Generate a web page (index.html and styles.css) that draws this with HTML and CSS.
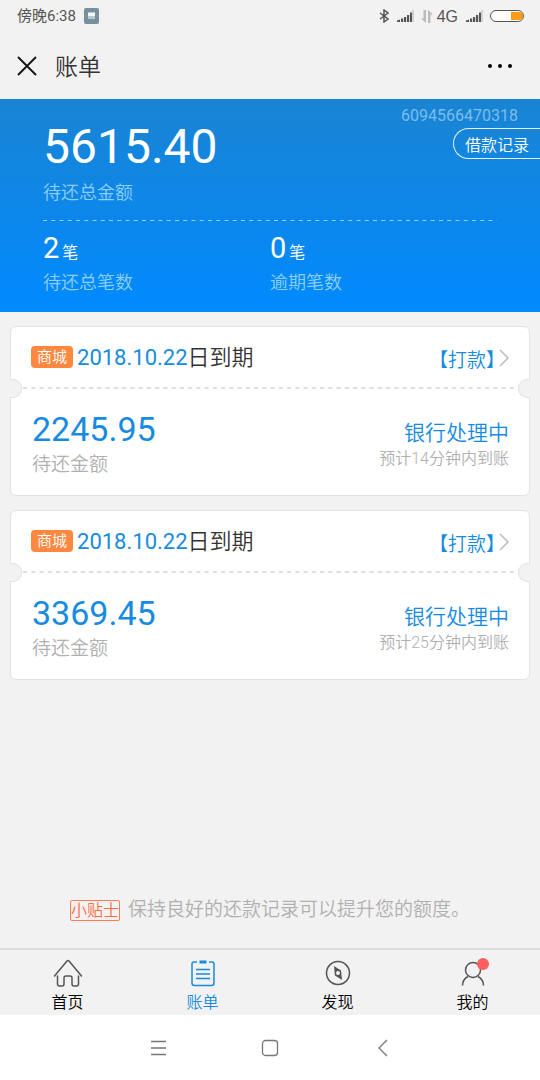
FILE: index.html
```
<!DOCTYPE html>
<html lang="zh-CN">
<head>
  <meta charset="UTF-8">
  <meta name="viewport" content="width=device-width, initial-scale=1.0">
  <title>账单</title>
  <link rel="stylesheet" href="styles.css">
</head>
<body>
  <div class="status-bar">
    <span class="time">傍晚6:38</span>
    <svg class="app-icon" width="15" height="16" viewBox="0 0 15 16"><rect width="15" height="16" rx="2" fill="#78909c"/><rect x="4" y="4" width="7" height="7" fill="#b9c8d0"/><rect x="4" y="5" width="7" height="3" fill="#f4f7f8"/></svg>
    <div class="status-icons">
      <svg width="10" height="14" viewBox="0 0 10 14" fill="none" stroke="#555" stroke-width="1.500"><path d="M1 4l8 6-4 3V1l4 3-8 6"/></svg>
      <svg class="signal" width="17" height="12" viewBox="0 0 17 12" fill="#555"><path d="M0 10.500l3-1V12H0zM4 8.500h2.200V12H4zM7 7h2.200v5H7zM10 5h2.200v7H10zM13 2.500h2V12h-2z"/><path d="M15 0h2v12h-2z" fill="#d2d2d2"/></svg>
      <svg class="data" width="12" height="13" viewBox="0 0 12 13" fill="#bbb"><path d="M2.500 0H5v13L0 8.500h2.500zM7 0l5 4.500H9.500V13H7z"/></svg>
      <span class="network">4G</span>
      <svg class="signal" width="17" height="12" viewBox="0 0 17 12" fill="#555"><path d="M0 10.500l3-1V12H0zM4 8.500h2.200V12H4zM7 7h2.200v5H7zM10 5h2.200v7H10zM13 2.500h2V12h-2z"/><path d="M15 0h2v12h-2z" fill="#d2d2d2"/></svg>
      <svg class="battery" width="34" height="12" viewBox="0 0 34 12"><rect x=".5" y=".5" width="33" height="11" rx="5.500" fill="#fff" stroke="#555"/><path d="M21 2h8a4 4 0 0 1 0 8h-8z" fill="#ff9a1a"/></svg>
    </div>
  </div>

  <header class="title-bar">
    <button class="icon-button" type="button" aria-label="关闭">
      <svg width="20" height="20" viewBox="0 0 20 20" fill="none" stroke="#111" stroke-width="1.800"><path d="M1 1l18 18M19 1L1 19"/></svg>
    </button>
    <h1>账单</h1>
    <button class="icon-button more" type="button" aria-label="更多">
      <svg width="24" height="4" viewBox="0 0 24 4" fill="#000"><circle cx="2" cy="2" r="2"/><circle cx="12" cy="2" r="2"/><circle cx="22" cy="2" r="2"/></svg>
    </button>
  </header>

  <section class="summary">
    <div class="account">
      <span class="account-id">6094566470318</span>
      <a class="history" href="#history">借款记录</a>
    </div>
    <div class="total">5615.40</div>
    <div class="summary-label">待还总金额</div>
    <svg class="summary-line" width="100%" height="1"><line x1="0" y1="0.500" x2="100%" y2="0.500" stroke="#9ad4f5" stroke-dasharray="4 4.250"/></svg>
    <div class="counts">
      <div>
        <div class="count">2<small>笔</small></div>
        <div class="summary-label">待还总笔数</div>
      </div>
      <div>
        <div class="count">0<small>笔</small></div>
        <div class="summary-label">逾期笔数</div>
      </div>
    </div>
  </section>

  <main class="bills">
    <article class="bill">
      <div class="bill-head">
        <span class="tag">商城</span>
        <span class="due"><span class="date">2018.10.22</span>日到期</span>
        <a class="pay" href="#pay">【打款】<svg width="10" height="18" viewBox="0 0 10 18" fill="none" stroke="#bbb" stroke-width="1.500"><path d="M1 1l8 8-8 8"/></svg></a>
      </div>
      <div class="tear"><svg width="100%" height="2"><line x1="0" y1="1" x2="100%" y2="1" stroke="#d5d5d5" stroke-width="1.500" stroke-dasharray="4.250 4"/></svg></div>
      <div class="bill-body">
        <div>
          <div class="amount">2245.95</div>
          <div class="amount-label">待还金额</div>
        </div>
        <div class="state">
          <div class="state-name">银行处理中</div>
          <div class="state-note">预计14分钟内到账</div>
        </div>
      </div>
    </article>

    <article class="bill">
      <div class="bill-head">
        <span class="tag">商城</span>
        <span class="due"><span class="date">2018.10.22</span>日到期</span>
        <a class="pay" href="#pay">【打款】<svg width="10" height="18" viewBox="0 0 10 18" fill="none" stroke="#bbb" stroke-width="1.500"><path d="M1 1l8 8-8 8"/></svg></a>
      </div>
      <div class="tear"><svg width="100%" height="2"><line x1="0" y1="1" x2="100%" y2="1" stroke="#d5d5d5" stroke-width="1.500" stroke-dasharray="4.250 4"/></svg></div>
      <div class="bill-body">
        <div>
          <div class="amount">3369.45</div>
          <div class="amount-label">待还金额</div>
        </div>
        <div class="state">
          <div class="state-name">银行处理中</div>
          <div class="state-note">预计25分钟内到账</div>
        </div>
      </div>
    </article>
  </main>

  <p class="tip"><span class="tip-tag">小贴士</span>保持良好的还款记录可以提升您的额度。</p>

  <nav class="tabs">
    <a href="#home">
      <svg width="30" height="28" viewBox="0 0 30 28" fill="none" stroke="#555" stroke-width="1.500" stroke-linecap="round" stroke-linejoin="round"><path d="M1.500 17L14 2q1-1 2 0l12.500 15"/><path d="M4.500 17v8q0 2 2 2h2.500q2 0 2-2v-6q0-2 2-2h4q2 0 2 2v6q0 2 2 2h2.500q2 0 2-2v-8"/></svg>
      首页
    </a>
    <a class="active" href="#bill">
      <svg width="30" height="28" viewBox="0 0 30 28" fill="none" stroke="#168be0" stroke-width="1.500"><path d="M9 3H6Q4 3 4 5v19q0 2.500 2.500 2.500h17q2.500 0 2.500-2.500V5q0-2-2-2h-3M8 10.500h14M8 15h14M8 19.500h14"/><path d="M11.500 3h7" stroke-width="3"/></svg>
      账单
    </a>
    <a href="#discover">
      <svg width="30" height="28" viewBox="0 0 30 28" fill="none" stroke="#555" stroke-width="1.500"><circle cx="15" cy="14" r="11.500"/><path d="M11 7l7 4.500 1 9.500-7-4.500z" fill="#555" stroke="none"/><circle cx="15" cy="14" r="2.600" fill="#f2f2f2" stroke-width="1.200"/></svg>
      发现
    </a>
    <a class="mine" href="#mine">
      <svg width="30" height="28" viewBox="0 0 30 28" fill="none" stroke="#555" stroke-width="1.500"><circle cx="15" cy="11" r="7.500"/><path d="M4.500 26.500q0-6 5.500-9M25.500 26.500q0-6-5.500-9"/></svg>
      我的
    </a>
  </nav>

  <div class="system-nav">
    <button type="button" aria-label="菜单"><svg width="18" height="18" viewBox="0 0 18 18" fill="none" stroke="#777" stroke-width="1.500"><path d="M2 2.500h15M2 9h15M2 15.500h15"/></svg></button>
    <button type="button" aria-label="主屏幕"><svg width="18" height="18" viewBox="0 0 18 18" fill="none" stroke="#777" stroke-width="1.300"><rect x="1.500" y="1.500" width="15" height="15" rx="3"/></svg></button>
    <button type="button" aria-label="返回"><svg width="18" height="18" viewBox="0 0 18 18" fill="none" stroke="#777" stroke-width="1.300"><path d="M14 1L6 9l8 8"/></svg></button>
  </div>
</body>
</html>
```
FILE: styles.css
```
* {
  box-sizing: border-box;
}
body {
  margin: 0;
  min-height: 100vh;
  display: flex;
  flex-direction: column;
  background: #f2f2f2;
  color: #333;
  font-family: Roboto, "Noto Sans CJK SC", sans-serif;
  font-weight: 350;
}
svg {
  display: block;
  flex: none;
}
a {
  color: inherit;
  text-decoration: none;
}
button {
  padding: 0;
  border: 0;
  background: none;
}

/* status bar */
.status-bar {
  display: flex;
  align-items: center;
  height: 32px;
  padding: 0 16px 0 17px;
  color: #555;
  font-size: 15px;
  font-weight: 400;
  line-height: 20px;
}
.app-icon {
  margin-left: 8px;
}
.status-icons {
  display: flex;
  align-items: center;
  margin-left: auto;
}
.signal {
  margin-left: 8px;
}
.data {
  margin: 0 4px 0 7px;
}
.network {
  padding-top: 2px;
  font-family: "Liberation Sans", sans-serif;
  font-size: 16px;
}
.battery {
  margin-left: 7px;
}

/* title bar */
.title-bar {
  display: flex;
  align-items: center;
  height: 67px;
  padding: 0 28px 0 17px;
}
.title-bar h1 {
  margin: 0 0 0 18px;
  padding-bottom: 2px;
  font-size: 23px;
  font-weight: 350;
}
.more {
  margin-left: auto;
}

/* summary */
.summary {
  position: relative;
  height: 213px;
  padding: 18px 43px 0;
  background: linear-gradient(#1a84d2, #008aff);
  color: #fff;
}
.account {
  position: absolute;
  top: 5px;
  right: 0;
  display: flex;
  flex-direction: column;
  align-items: flex-end;
}
.account-id {
  margin-right: 22px;
  color: #7dbdeb;
  font-size: 16px;
  font-weight: 400;
  line-height: 24px;
}
.history {
  height: 31px;
  padding: 2px 11px 0;
  border: 1px solid #e3f4ff;
  border-right: 0;
  border-radius: 16px 0 0 16px;
  font-size: 16px;
  line-height: 30px;
}
.total {
  font-size: 48px;
  font-weight: 400;
  line-height: 60px;
}
.summary-label {
  color: #8fd0fa;
  font-size: 18px;
  line-height: 32px;
}
.summary-line {
  margin: 11px 0 9px;
}
.counts {
  display: grid;
  grid-template-columns: 1fr 1fr;
}
.count {
  font-size: 29px;
  font-weight: 400;
  line-height: 36px;
}
.counts .summary-label {
  line-height: 24px;
}
.count small {
  margin-left: 3px;
  font-size: 16px;
  font-weight: 350;
}

/* bills */
.bills {
  display: flex;
  flex-direction: column;
  gap: 14px;
  padding: 14px 10px;
}
.bill {
  border: 1px solid #e2e2e2;
  border-radius: 6px;
  background: #fff;
}
.bill-head {
  display: flex;
  align-items: center;
  height: 60px;
  padding: 0 20px;
}
.tag {
  margin-right: 4px;
  padding: 0 6px;
  border-radius: 4px;
  background: #ff8840;
  color: #fff;
  font-size: 15px;
  line-height: 22px;
}
.due {
  padding-bottom: 4px;
  font-size: 22px;
}
.date {
  color: #168be0;
  font-weight: 400;
}
.pay {
  display: flex;
  align-items: center;
  margin-left: auto;
  padding-top: 2px;
  color: #168be0;
  font-size: 19px;
}
.pay svg {
  margin-left: -6px;
}
.tear {
  position: relative;
  padding: 0 12px;
}
/* half circles cut into both edges of the card */
.tear::before,
.tear::after {
  content: "";
  position: absolute;
  top: -8px;
  width: 11px;
  height: 17px;
  border: 1px solid #e2e2e2;
  background: #f2f2f2;
}
.tear::before {
  left: -1px;
  border-left: 0;
  border-radius: 0 9px 9px 0;
}
.tear::after {
  right: -1px;
  border-right: 0;
  border-radius: 9px 0 0 9px;
}
.bill-body {
  display: flex;
  justify-content: space-between;
  padding: 19px 20px 15px 21px;
}
.amount {
  color: #168be0;
  font-size: 34px;
  font-weight: 400;
  line-height: 42px;
}
.amount-label {
  color: #b0b0b0;
  font-size: 19px;
  line-height: 30px;
}
.state {
  padding-top: 11px;
  text-align: right;
}
.state-name {
  color: #168be0;
  font-size: 21px;
  line-height: 28px;
}
.state-note {
  color: #b0b0b0;
  font-size: 16px;
  line-height: 24px;
}

/* tip */
.tip {
  display: flex;
  align-items: center;
  justify-content: center;
  margin: auto 0 24px;
  color: #b0b0b0;
  font-size: 19px;
  line-height: 28px;
}
.tip-tag {
  margin-right: 8px;
  border: 1px solid #ff7b57;
  border-radius: 2px;
  color: #ff6a45;
  font-size: 16px;
  line-height: 19px;
}

/* tabs */
.tabs {
  display: grid;
  grid-template-columns: repeat(4, 1fr);
  height: 67px;
  border-top: 2px solid #dcdcdc;
}
.tabs a {
  position: relative;
  display: flex;
  flex-direction: column;
  align-items: center;
  padding-top: 9px;
  color: #000;
  font-size: 16px;
  line-height: 32px;
}
.tabs .active {
  color: #168be0;
}
.mine::after {
  content: "";
  position: absolute;
  top: 8px;
  left: calc(50% + 4px);
  width: 12px;
  height: 12px;
  border-radius: 50%;
  background: #ff5f60;
}

/* system navigation */
.system-nav {
  display: flex;
  align-items: center;
  justify-content: center;
  gap: 94px;
  height: 65px;
  background: #fff;
}
```
